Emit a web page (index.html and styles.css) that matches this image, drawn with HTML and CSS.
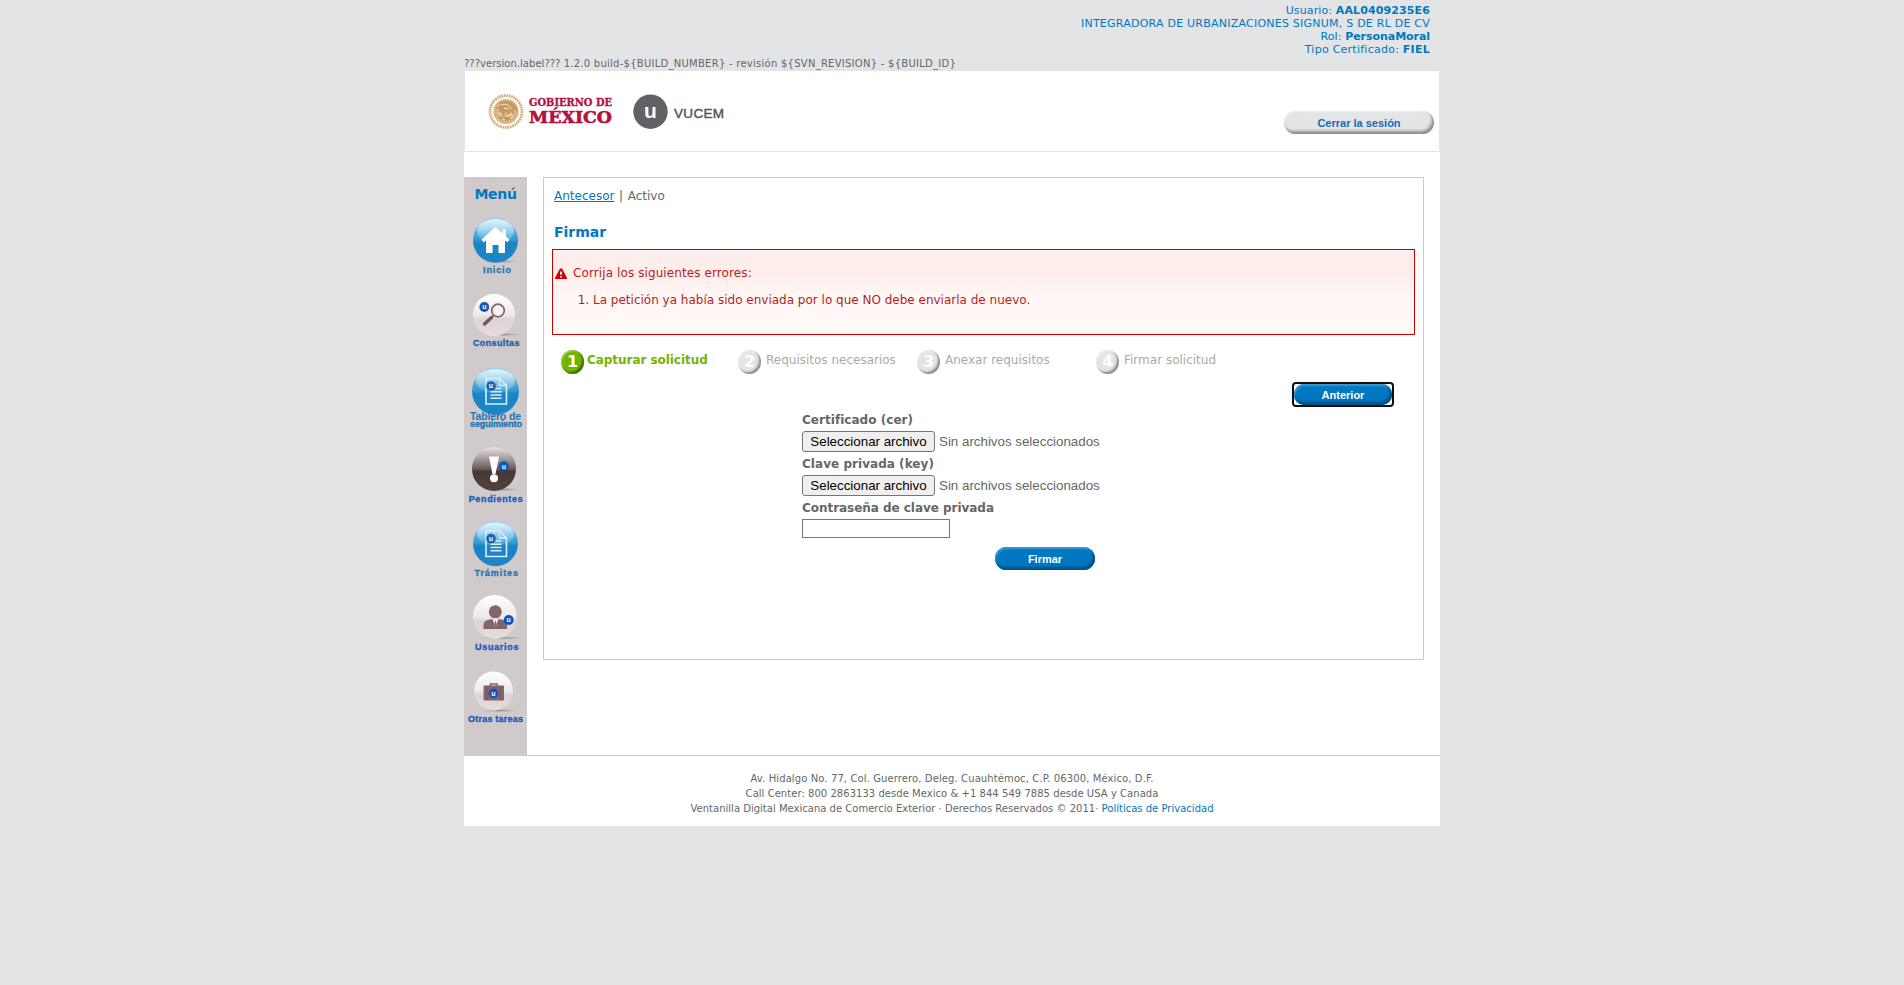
FILE: index.html
```html
<!DOCTYPE html>
<html lang="es">
<head>
<meta charset="utf-8">
<title>Firmar</title>
<link rel="stylesheet" href="styles.css">
</head>
<body>
<svg class="defs" width="0" height="0" aria-hidden="true">
  <defs>
    <linearGradient id="blue" x1="0" y1="0" x2="0" y2="1"><stop offset="0" stop-color="#8fd4f5"/><stop offset=".5" stop-color="#2f97d0"/><stop offset=".55" stop-color="#1c84c4"/><stop offset="1" stop-color="#1b86c6"/></linearGradient>
    <linearGradient id="gloss" x1="0" y1="0" x2="0" y2="1"><stop offset="0" stop-color="#fff" stop-opacity=".75"/><stop offset="1" stop-color="#fff" stop-opacity=".05"/></linearGradient>
    <linearGradient id="pale" x1="0" y1="0" x2="0" y2="1"><stop offset="0" stop-color="#fff"/><stop offset=".5" stop-color="#eee9e9"/><stop offset=".6" stop-color="#ddd3d4"/><stop offset="1" stop-color="#e6dddd"/></linearGradient>
    <linearGradient id="dark" x1="0" y1="0" x2="0" y2="1"><stop offset="0" stop-color="#e8e4e4"/><stop offset=".5" stop-color="#6a5a59"/><stop offset=".55" stop-color="#473735"/><stop offset="1" stop-color="#54423f"/></linearGradient>
    <radialGradient id="shade"><stop offset="0" stop-color="#777" stop-opacity=".75"/><stop offset="1" stop-color="#999" stop-opacity=".15"/></radialGradient>
    <g id="doc">
      <path d="M-9.500 -12.500H4L11 -5.500V13H-9.500Z" fill="none" stroke="#d8effa" stroke-width="1.600"/>
      <path d="M4 -12.500V-5.500H11" fill="none" stroke="#d8effa" stroke-width="1.400"/>
      <path d="M0 -2.500H6M-5 .8H6M-5 4H6M-5 7.200H6" stroke="#d8effa" stroke-width="1.500"/>
      <circle cx="-4.500" cy="-5" r="4.800" fill="#1766ad"/>
      <text x="-4.500" y="-2.800" class="badge-u">u</text>
    </g>
  </defs>
</svg>

<div class="page">
  <div class="user">
    <div class="u1">Usuario: <b>AAL0409235E6</b></div>
    <div class="u2">INTEGRADORA DE URBANIZACIONES SIGNUM, S DE RL DE CV</div>
    <div class="u3">Rol: <b class="role">PersonaMoral</b></div>
    <div class="u4">Tipo Certificado: <b>FIEL</b></div>
  </div>
  <div class="version"><span>???version.label??? </span>1.2.0 build-${BUILD_NUMBER} - revisión ${SVN_REVISION} - ${BUILD_ID}</div>

  <header class="header">
    <svg class="logo" width="270" height="60" viewBox="480 81 270 60">
      <g fill="none" stroke="#cfa468">
        <circle cx="506" cy="111.500" r="15.800" stroke-width="2.600" stroke-dasharray="1.500 .9"/>
        <circle cx="506" cy="111.500" r="17.200" stroke-width=".5" opacity=".6"/>
      </g>
      <circle cx="506" cy="111.500" r="12.600" fill="#d9b688"/>
      <path d="M496 108c3-6 8-8 13-6 5 1 8 5 8 9l-4-3 1 6-4-4-1 5-3-5-3 6-1-5-3 2 1-5zM498 117c4 4 11 5 16 0" fill="#c79a5e" stroke="#c4955a" stroke-width=".8"/>
      <path d="M501 105c4-2 8 0 11 4M498 112l4 3M507 116l5-2M504 108l5 1M497 107l3-3M510 119l4-3M502 119l3 1" stroke="#f7eddd" stroke-width="1" fill="none"/>
      <text x="529" y="105.600" textLength="83" lengthAdjust="spacingAndGlyphs" class="gob">GOBIERNO DE</text>
      <text x="529" y="123.300" textLength="83" lengthAdjust="spacingAndGlyphs" class="mex">MÉXICO</text>
      <circle cx="650.500" cy="111.700" r="17.200" fill="#626167"/>
      <text x="650.500" y="117.500" class="logo-u">u</text>
      <text x="674" y="118" textLength="50" class="vucem">VUCEM</text>
    </svg>
    <button class="btn-out">Cerrar la sesión</button>
  </header>

  <div class="body">
    <nav class="menu">
      <h2>Menú</h2>
      <svg width="63" height="74" viewBox="464 210 63 74">
        <ellipse cx="501" cy="261.500" rx="16" ry="1.300" fill="url(#shade)"/>
        <circle cx="495.500" cy="240.300" r="22.500" fill="url(#blue)"/>
        <ellipse cx="495.500" cy="231" rx="18.500" ry="12" fill="url(#gloss)"/>
        <path d="M495.500 227L509.500 239.500L507.500 242.200L505 240.500V253H498.500V245H492.500V253H486V240.500L483.500 242.200L481.500 239.500ZM502.500 229.500H506V236.500L502.500 233Z" fill="#fff"/>
        <text x="483" y="272.500" textLength="28" class="lbl sky">Inicio</text>
      </svg>
      <svg width="63" height="74" viewBox="464 284 63 74">
        <ellipse cx="503" cy="334.500" rx="17" ry="1.500" fill="url(#shade)"/>
        <circle cx="494" cy="315" r="21.200" fill="url(#pale)"/>
        <circle cx="498" cy="310.500" r="6.300" fill="#f6f1f1" stroke="#84636a" stroke-width="1.700"/>
        <path d="M493.500 315.500L491 318" stroke="#84636a" stroke-width="2"/>
        <path d="M491.500 317.500L484.500 324" stroke="#76565c" stroke-width="3.500" stroke-linecap="round"/>
        <circle cx="484.300" cy="307" r="4.900" fill="#1757ad"/><text x="484.300" y="309.200" class="badge-u">u</text>
        <text x="473" y="345.500" textLength="46.500" class="lbl blue">Consultas</text>
      </svg>
      <svg width="63" height="79" viewBox="464 358 63 79">
        <circle cx="495.500" cy="391.300" r="23.500" fill="url(#blue)"/>
        <ellipse cx="495.500" cy="381" rx="19.500" ry="12" fill="url(#gloss)"/>
        <use href="#doc" x="495.500" y="391"/>
        <text x="470" y="420.300" textLength="51" class="lbl sky big">Tablero de</text>
        <text x="470" y="426.500" textLength="52" class="lbl sky">seguimiento</text>
      </svg>
      <svg width="63" height="76" viewBox="464 437 63 76">
        <ellipse cx="502" cy="489.500" rx="17" ry="1.500" fill="url(#shade)"/>
        <circle cx="494" cy="469" r="22" fill="url(#dark)"/>
        <path d="M489 456.500H499L495.500 474H492.500Z" fill="#fff"/>
        <circle cx="494" cy="478.300" r="4" fill="#fff"/>
        <circle cx="503.800" cy="466.300" r="5" fill="#0a56c4"/><text x="503.800" y="468.500" class="badge-u">u</text>
        <text x="468.700" y="501.500" textLength="54" class="lbl royal">Pendientes</text>
      </svg>
      <svg width="63" height="74" viewBox="464 513 63 74">
        <circle cx="495.500" cy="543.700" r="22.500" fill="url(#blue)"/>
        <ellipse cx="495.500" cy="534" rx="18.500" ry="11.500" fill="url(#gloss)"/>
        <use href="#doc" x="495.500" y="543.500"/>
        <text x="474.500" y="575.500" textLength="43.500" class="lbl sky">Trámites</text>
      </svg>
      <svg width="63" height="74" viewBox="464 587 63 74">
        <ellipse cx="502" cy="638" rx="20" ry="1.500" fill="url(#shade)"/>
        <circle cx="494.800" cy="617" r="22" fill="url(#pale)"/>
        <circle cx="495.300" cy="611.800" r="6.500" fill="#84636a"/>
        <path d="M483.500 629V625Q484 620.500 488 620L492.500 619L495.500 626L498.500 619L503 620Q507 621 507 625V629Z" fill="#84636a"/>
        <path d="M492.500 618.500L495.500 628L498.500 618.500Z" fill="#f3eded"/><path d="M495.500 620L496.700 624L495.500 628L494.300 624Z" fill="#84636a"/>
        <circle cx="508.700" cy="620" r="5" fill="#0a56c4"/><text x="508.700" y="622.200" class="badge-u">u</text>
        <text x="475" y="649.500" textLength="43.500" class="lbl royal">Usuarios</text>
      </svg>
      <svg width="63" height="94" viewBox="464 661 63 94">
        <ellipse cx="499" cy="710.500" rx="17" ry="1.400" fill="url(#shade)"/>
        <circle cx="493.500" cy="691" r="19.500" fill="url(#pale)"/>
        <path d="M490.500 687V684H497V687" fill="none" stroke="#84636a" stroke-width="1.500"/>
        <rect x="483.500" y="685.500" width="20.500" height="15" rx="1" fill="#84636a"/>
        <path d="M487 686V700M500.500 686V700" stroke="#6f5157" stroke-width=".8"/>
        <circle cx="493.500" cy="693.500" r="4.800" fill="#0a56c4"/><text x="493.500" y="695.700" class="badge-u">u</text>
        <text x="468" y="721.500" textLength="55" class="lbl royal">Otras tareas</text>
      </svg>
    </nav>

    <main class="panel">
      <div class="crumbs"><a href="#">Antecesor</a> | Activo</div>
      <h1>Firmar</h1>
      <div class="error">
        <p><svg width="12" height="11" viewBox="0 0 12 11"><path d="M5 .5H7L12 10V11H0V10Z" fill="#c00"/><path d="M6 3.500V6.700M6 8V9.500" stroke="#fff" stroke-width="1.700"/></svg><span>Corrija los siguientes errores:</span></p>
        <ol><li>La petición ya había sido enviada por lo que NO debe enviarla de nuevo.</li></ol>
      </div>
      <div class="steps">
        <div class="step active"><i>1</i><span>Capturar solicitud</span></div>
        <div class="step"><i>2</i><span>Requisitos necesarios</span></div>
        <div class="step"><i>3</i><span>Anexar requisitos</span></div>
        <div class="step"><i>4</i><span>Firmar solicitud</span></div>
      </div>
      <div class="back"><div class="focus"><button class="btn">Anterior</button></div></div>
      <form class="form">
        <label>Certificado (cer)</label>
        <div class="file"><button type="button">Seleccionar archivo</button><span>Sin archivos seleccionados</span></div>
        <label>Clave privada (key)</label>
        <div class="file"><button type="button">Seleccionar archivo</button><span>Sin archivos seleccionados</span></div>
        <label class="pw">Contraseña de clave privada</label>
        <input type="password">
        <button type="button" class="btn sign">Firmar</button>
      </form>
    </main>
  </div>

  <footer class="footer">
    <div class="f1">Av. Hidalgo No. 77, Col. Guerrero, Deleg. Cuauhtémoc, C.P. 06300, México, D.F.</div>
    <div class="f2">Call Center: 800 2863133 desde Mexico &amp; +1 844 549 7885 desde USA y Canada</div>
    <div class="f3">Ventanilla Digital Mexicana de Comercio Exterior · Derechos Reservados © 2011· <a href="#">Políticas de Privacidad</a></div>
  </footer>
</div>
</body>
</html>
```
FILE: styles.css
```css
* { box-sizing: border-box; }
body {
  margin: 0;
  background: #e3e4e6;
  color: #666;
  font: 12px/15px "DejaVu Sans", Verdana, sans-serif;
}
.defs { display: block; }
a { color: #0077c0; text-decoration: none; }
h1, h2, p, ol { margin: 0; }
.page { width: 976px; margin: 0 auto; }

.user {
  height: 56px;
  padding: 4px 10px 0 0;
  color: #0077c0;
  font-size: 11px;
  line-height: 13px;
  text-align: right;
}
.u1 { letter-spacing: .12px; }
.u2 { letter-spacing: .23px; }
.u3 { letter-spacing: .12px; }
.u4 { letter-spacing: .25px; }
.role { letter-spacing: -.05px; }
.version {
  height: 15px;
  font-size: 10px;
  line-height: 15px;
  letter-spacing: .26px;
  white-space: nowrap;
}
.version span { letter-spacing: .03px; }

.header {
  display: flex;
  justify-content: space-between;
  align-items: flex-start;
  width: 974px;
  height: 80px;
  margin-left: 1px;
  padding: 10px 5px 0 15px;
  background: #fff;
}
.logo text { font-family: "Liberation Sans", Arial, sans-serif; font-weight: 700; }
.logo .gob, .logo .mex { font-family: "DejaVu Serif", serif; fill: #b3123f; stroke: #b3123f; }
.logo .gob { font-size: 10.5px; stroke-width: .35px; }
.logo .mex { font-size: 17px; stroke-width: .6px; }
.logo .logo-u { fill: #fff; font-size: 21px; text-anchor: middle; }
.logo .vucem { fill: #55555a; font-size: 13.5px; font-weight: 400; stroke: #55555a; stroke-width: .45px; }
.btn-out {
  width: 150px;
  height: 23px;
  margin-top: 30px;
  padding: 1px 0 0;
  border: 0;
  border-radius: 12px;
  background: #e3e4e6;
  box-shadow: inset -2px -3px 3px #8d8f91, inset 1px 1px 2px #eee;
  color: #0f6cb8;
  font: 700 11px "Liberation Sans", Arial, sans-serif;
}

.body {
  display: flex;
  height: 604px;
  margin-top: 1px;
  padding-top: 25px;
  background: #fff;
  border-bottom: 1px solid #ccc;
}
.menu {
  display: flex;
  flex-direction: column;
  width: 63px;
  height: 579px;
  background: #d0caca;
}
.menu h2 {
  height: 33px;
  padding-top: 9px;
  color: #0077c0;
  font-size: 14px;
  line-height: 17px;
  letter-spacing: -.3px;
  text-align: center;
}
.menu svg { display: block; flex: none; }
.lbl { font: 700 9px "Liberation Sans", Arial, sans-serif; stroke-width: .3px; }
.lbl.big { font-size: 10.5px; stroke-width: 0; }
.sky { fill: #2075b5; stroke: #2075b5; }
.blue { fill: #1660b0; stroke: #1660b0; }
.royal { fill: #1158c4; stroke: #1158c4; }
.badge-u { fill: #fff; font: 700 7px "Liberation Sans", Arial, sans-serif; text-anchor: middle; }

.panel {
  width: 881px;
  height: 483px;
  margin-left: 16px;
  padding: 11px 8px 0;
  border: 1px solid #ccc;
}
.crumbs { padding-left: 2px; word-spacing: .8px; }
.crumbs a { text-decoration: underline; }
.panel h1 {
  margin-top: 20px;
  padding-left: 2px;
  color: #0077c0;
  font-size: 14px;
  line-height: 17px;
}
.error {
  height: 86px;
  margin-top: 8px;
  padding: 16px 2px 0;
  border: 1px solid #c00;
  background: linear-gradient(#feeeeb 0, #feeeeb 30%, #fff8f6 58%, #fff9f7 100%);
  color: #b51e1e;
}
.error p { display: flex; align-items: center; gap: 6px; letter-spacing: .1px; }
.error ol { margin-top: 12px; padding-left: 38px; }
.steps {
  display: grid;
  grid-template-columns: 177px 179px 179px 1fr;
  margin-top: 15px;
  padding-left: 9px;
}
.step { display: flex; gap: 5px; height: 24px; color: #aaa; white-space: nowrap; }
.step span { line-height: 21px; }
.step i {
  width: 23px;
  height: 24px;
  border-radius: 50%;
  background: #e3e4e6;
  box-shadow: inset -2px -2px 2px #8f8f90, inset 1px 1px 2px #eee;
  color: #fff;
  font: 700 16px/23px "DejaVu Sans", sans-serif;
  text-align: center;
}
.step.active { color: #73b400; font-weight: 700; letter-spacing: -.05px; gap: 3px; }
.step.active i { background: #73b400; box-shadow: inset -2px -2px 2px #447000, inset 1px 1px 2px #a4d04f; }
.back { display: flex; justify-content: flex-end; margin-top: 8px; padding-right: 21px; }
.btn {
  display: block;
  width: 100px;
  height: 23px;
  padding: 1px 0 0;
  border: 0;
  border-radius: 12px;
  background: #0077c0;
  box-shadow: inset -2px -3px 3px #005086, inset 1px 2px 2px #3c9ad4;
  color: #fff;
  font: 700 11px "Liberation Sans", Arial, sans-serif;
}
.focus { border: 2px solid #101010; border-radius: 4px; background: #fff; }
.focus .btn { width: 98px; height: 21px; padding: 0; border-radius: 10px; }
.form {
  display: flex;
  flex-direction: column;
  align-items: flex-start;
  width: 293px;
  margin: 5px 0 0 250px;
}
.form label { height: 19px; line-height: 16px; font-weight: 700; letter-spacing: .04px; }
.form .pw { letter-spacing: -.04px; }
.file {
  display: flex;
  align-items: center;
  gap: 4px;
  height: 21px;
  margin-bottom: 4px;
  font: 13.333px "Liberation Sans", Arial, sans-serif;
  white-space: nowrap;
}
.file button {
  width: 133px;
  height: 21px;
  padding: 0;
  border: 1px solid #767676;
  border-radius: 3px;
  background: #efefef;
  color: #000;
  font: inherit;
}
.form input { width: 148px; height: 19px; border: 1px solid #767676; background: #fff; padding: 0; }
.form .sign { align-self: flex-end; margin-top: 9px; }

.footer {
  height: 70px;
  padding-top: 15px;
  background: #fff;
  font-size: 10px;
  text-align: center;
  white-space: nowrap;
}
.f1 { letter-spacing: .107px; }
.f2 { letter-spacing: .04px; }
.f3 { letter-spacing: .012px; }
```
